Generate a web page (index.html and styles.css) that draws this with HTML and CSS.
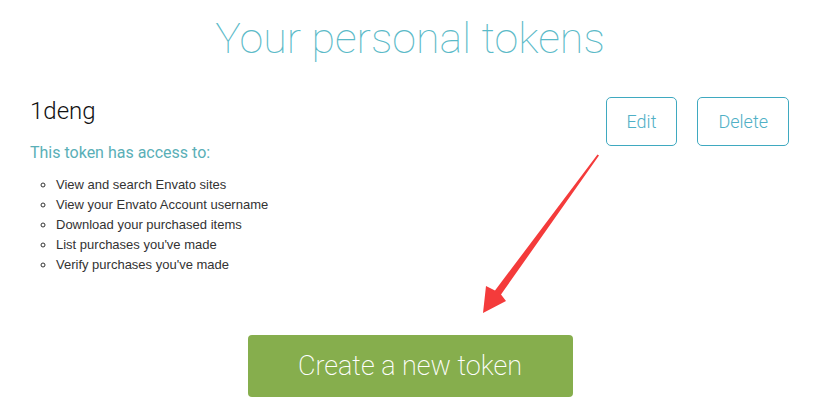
FILE: index.html
```html
<!DOCTYPE html>
<html lang="en">
<head>
    <meta charset="UTF-8">
    <meta name="viewport" content="width=device-width, initial-scale=1.0">
    <title>Your personal tokens</title>
    <link rel="stylesheet" href="styles.css">
</head>
<body>

<div class="page">
    <h1 class="title">Your personal tokens</h1>

    <!-- token card -->
    <div class="token">
        <div class="token-info">
            <h2 class="token-name">1deng</h2>
            <p class="access">This token has access to:</p>
            <ul class="perms">
                <li>View and search Envato sites</li>
                <li>View your Envato Account username</li>
                <li>Download your purchased items</li>
                <li>List purchases you've made</li>
                <li>Verify purchases you've made</li>
            </ul>
        </div>
        <div class="token-actions">
            <button class="btn-outline">Edit</button>
            <button class="btn-outline">Delete</button>
        </div>
    </div>

    <div class="create">
        <button class="btn-create">Create a new token</button>
    </div>

    <!-- annotation arrow -->
    <svg class="arrow" width="840" height="420" viewBox="0 0 840 420">
        <polygon points="599,155.5 501,294.5 506,301 483,313 486,286 495,290.5 597.5,154.5" fill="#f43b3b"/>
    </svg>
</div>

</body>
</html>
```

FILE: styles.css
```css
body { margin: 0; background: #fff; font-family: Roboto, "Liberation Sans", sans-serif; }
.page { position: relative; width: 820px; height: 420px; overflow: hidden; }

.title {
    margin: 0;
    padding-top: 10px;
    text-align: center;
    font-size: 43px;
    line-height: 56px;
    font-weight: 100;
    color: #5bbac8;
}

.token {
    display: flex;
    justify-content: space-between;
    align-items: flex-start;
    padding: 31px 31px 0 30px;
}
.token-name { margin: 0; font-size: 24px; line-height: 28px; font-weight: 300; color: #111; }
.access { margin: 18px 0 0; font-size: 16px; line-height: 20px; color: #5aafb7; }
.perms {
    margin: 12px 0 0;
    padding-left: 26px;
    list-style: circle;
    font-family: "Liberation Sans", Arial, sans-serif;
    font-size: 13px;
    line-height: 20px;
    color: #333;
}

.token-actions { display: flex; gap: 20px; }
.btn-outline {
    height: 49px;
    padding: 0 20px;
    border: 1px solid #3fa9c0;
    border-radius: 5px;
    background: #fff;
    color: #4fb0c6;
    font-family: Roboto, sans-serif;
    font-size: 18px;
    font-weight: 300;
    cursor: pointer;
}

.create { display: flex; justify-content: center; margin-top: 60px; }
.btn-create {
    width: 325px;
    height: 62px;
    border: none;
    border-radius: 4px;
    background: #86ae4d;
    color: #fff;
    font-family: Roboto, sans-serif;
    font-size: 27px;
    font-weight: 200;
    cursor: pointer;
}

.arrow { position: absolute; left: 0; top: 0; pointer-events: none; }
```
